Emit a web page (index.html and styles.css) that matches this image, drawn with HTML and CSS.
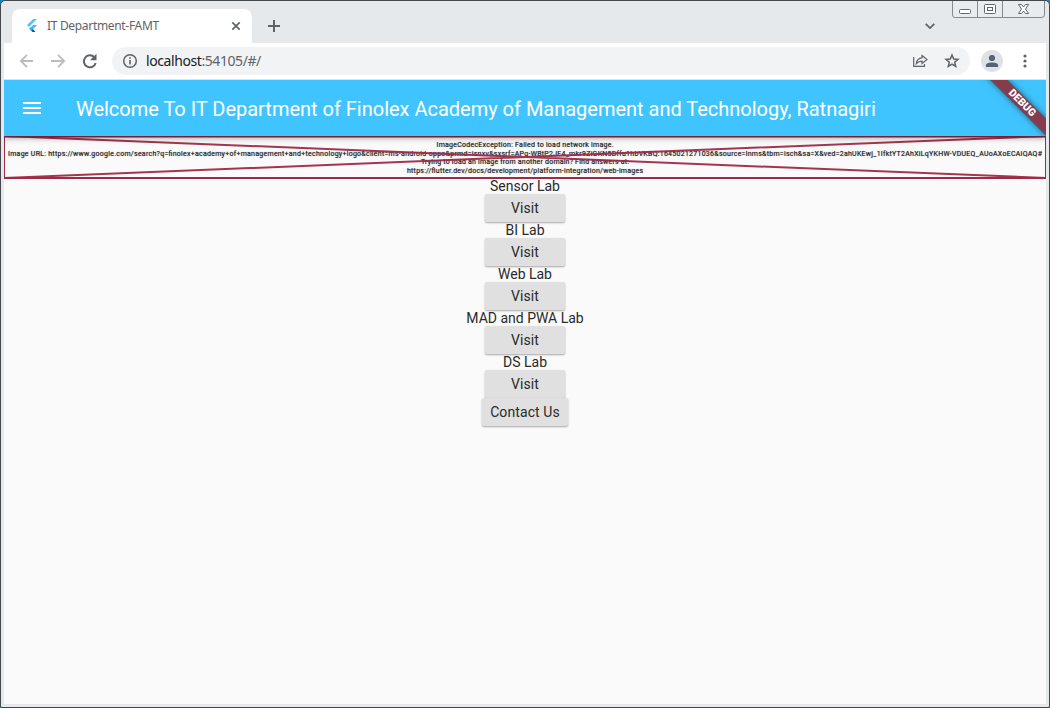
FILE: index.html
```html
<!DOCTYPE html>
<html lang="en">
<head>
<meta charset="utf-8">
<title>IT Department-FAMT</title>
<link rel="stylesheet" href="styles.css">
</head>
<body>
<div class="window">
  <header class="tabstrip">
    <div class="tab">
      <svg class="favicon" width="12" height="14" viewBox="0 0 12 14"><path d="M7.2 0H11L3 8 1 6z" fill="#54c5f8"/><path d="M7.2 6H11L7 10 5 8.2z" fill="#40b6f5"/><path d="M5 8.2 7 10.2 9.6 13H6.5L3.4 9.8z" fill="#01579b"/><path d="M3.4 9.8 5.2 8l1.8 2-1.8 1.8z" fill="#29b6f6"/></svg>
      <span class="tab-title">IT Department-FAMT</span>
      <svg class="tab-close" width="10" height="10" viewBox="0 0 10 10"><path d="M1.3 1.3 8.7 8.7M8.7 1.3 1.3 8.7" stroke="#5f6368" stroke-width="1.7"/></svg>
    </div>
    <svg class="new-tab" width="12" height="12" viewBox="0 0 12 12"><path d="M6 0V12M0 6H12" stroke="#5f6368" stroke-width="2"/></svg>
    <svg class="tab-search" width="10" height="7" viewBox="0 0 10 7"><path d="M.7.8 5 5.1 9.3.8" fill="none" stroke="#5f6368" stroke-width="1.8"/></svg>
    <svg class="controls" width="94" height="18" viewBox="0 0 94 18"><path d="M.5 0V14Q.5 16.500 3 16.500H89Q92.500 16.500 92.500 14V0M25.500 0V16M50.500 0V16" fill="#e9ecef" stroke="#858a8e"/><g fill="#fff" stroke="#63676b"><rect x="7.500" y="8.500" width="11" height="4" rx="1"/><rect x="32.500" y="3.500" width="11" height="9" rx="1"/><rect x="35.500" y="6.500" width="5" height="3"/><path d="M66.500 3.500H69.500L71.500 6 73.500 3.500H76.500L73.500 8 76.500 12.500H73.500L71.500 10 69.500 12.500H66.500L69.500 8z"/></g></svg>
  </header>
  <div class="toolbar">
    <svg class="nav" width="80" height="16" viewBox="0 0 80 16"><path d="M15 8H3M9 1.800 2.800 8 9 14.200M33 8H46M40 1.800 46.200 8 40 14.200" fill="none" stroke="#babcbe" stroke-width="1.800"/><path d="M76.300 4.200A6 6 0 1 0 77.700 10" fill="none" stroke="#5f6368" stroke-width="2"/><path d="M78.500.8V7.200H72z" fill="#5f6368"/></svg>
    <div class="omnibox">
      <svg width="16" height="16" viewBox="0 0 16 16"><circle cx="8" cy="8" r="6.300" fill="none" stroke="#5f6368" stroke-width="1.500"/><path d="M8 7V11.500M8 4.200V5.800" stroke="#5f6368" stroke-width="1.600"/></svg>
      <span class="url">localhost<span class="url-rest">:54105/#/</span></span>
      <svg class="share" width="17" height="16" viewBox="0 0 17 16"><path d="M1.700 4V13.400H12.500V11M10 2.500 15 6.500 10 10.400V8.200Q6.500 8.200 4.300 10.700 4.800 5.300 10 4.800z" fill="none" stroke="#5f6368" stroke-width="1.200"/></svg>
      <svg class="star" width="16" height="16" viewBox="0 0 16 16"><path d="M8 2 9.700 6 14 6.400 10.700 9.200 11.700 13.500 8 11.200 4.300 13.500 5.300 9.200 2 6.400 6.300 6z" fill="none" stroke="#5f6368" stroke-width="1.500"/></svg>
    </div>
    <svg class="avatar" width="22" height="22" viewBox="0 0 22 22"><circle cx="11" cy="11" r="11" fill="#dee1e6"/><circle cx="11" cy="8" r="3.100" fill="#56627a"/><path d="M5 17V15.200Q5 12.500 11 12.500T17 15.200V17z" fill="#56627a"/></svg>
    <svg class="kebab" width="4" height="14" viewBox="0 0 4 14" fill="#5f6368"><circle cx="2" cy="2" r="1.600"/><circle cx="2" cy="7" r="1.600"/><circle cx="2" cy="12" r="1.600"/></svg>
  </div>
  <main class="page">
    <div class="appbar">
      <svg class="menu" width="18" height="12" viewBox="0 0 18 12"><path d="M0 1H18M0 6H18M0 11H18" stroke="#fff" stroke-width="2"/></svg>
      <h1 class="app-title">Welcome To IT Department of Finolex Academy of Management and Technology, Ratnagiri</h1>
    </div>
    <svg class="image-error" width="1042" height="43" viewBox="0 0 1042 43">
      <g class="error-text" text-anchor="middle">
        <text x="521" y="11" textLength="177">ImageCodecException: Failed to load network image.</text>
        <text x="521" y="20" textLength="1034">Image URL: https://www.google.com/search?q=finolex+academy+of+management+and+technology+logo&amp;client=ms-android-oppo&amp;prmd=isnxv&amp;sxsrf=APq-WBtP2JF4_mkr9ZiGKN5Dffu1hbVKBQ:1645021271036&amp;source=lnms&amp;tbm=isch&amp;sa=X&amp;ved=2ahUKEwj_1IfktYT2AhXiLqYKHW-VDUEQ_AUoAXoECAIQAQ#</text>
        <text x="521" y="28" textLength="208">Trying to load an image from another domain? Find answers at:</text>
        <text x="521" y="37" textLength="236">https://flutter.dev/docs/development/platform-integration/web-images</text>
      </g>
      <g stroke="#9f2a46" fill="none" stroke-width="2"><path d="M0 0 1042 42M0 42 1042 0" stroke-opacity=".95"/><path d="M0 .5H1042M0 42H1042"/><path d="M.5 0V43M1041.500 0V43" stroke-width="1"/></g>
    </svg>
    <div class="labs">
      <span class="lab">Sensor Lab</span><button class="btn">Visit</button>
      <span class="lab">BI Lab</span><button class="btn">Visit</button>
      <span class="lab">Web Lab</span><button class="btn">Visit</button>
      <span class="lab">MAD and PWA Lab</span><button class="btn">Visit</button>
      <span class="lab">DS Lab</span><button class="btn">Visit</button>
      <button class="btn btn-wide">Contact Us</button>
    </div>
    <div class="debug"><span class="ribbon">DEBUG</span></div>
  </main>
</div>
</body>
</html>
```
FILE: styles.css
```css
* { box-sizing: border-box; }
body { margin: 0; background: #0e83c9; font-family: Roboto, sans-serif; }
svg { display: block; flex: none; }
.window { width: 1050px; height: 708px; padding: 0 3px 3px; border: 1px solid #45474a; border-radius: 5px 5px 2px 2px; background: #e5e9ec; overflow: hidden; }
.tabstrip { height: 42px; display: flex; align-items: flex-start; padding-left: 8px; }
.tab { width: 240px; height: 34px; margin-top: 8px; padding: 0 11px 0 14px; display: flex; align-items: center; background: #fff; border-radius: 8px 8px 0 0; }
.favicon { margin-right: 9px; }
.tab-title { margin-top: -1px; font: 12px "Noto Sans", sans-serif; letter-spacing: -.32px; color: #5f6368; white-space: nowrap; }
.tab-close { margin-left: auto; }
.new-tab { margin: 19px 0 0 16px; }
.tab-search { margin: 22px 17px 0 auto; }
.toolbar { height: 37px; display: flex; align-items: center; background: #fff; border-bottom: 1px solid #dfe1e4; }
.nav { margin: 0 13px 0 14px; }
.nav + .omnibox { margin-left: 1px; }
.omnibox { width: 858px; height: 28px; padding: 0 10px; display: flex; align-items: center; border-radius: 14px; background: #f1f3f4; }
.url { margin: -1px 0 0 8px; font: 14px "Noto Sans", sans-serif; letter-spacing: -.42px; color: #202124; }
.url-rest { color: #5f6368; }
.share { margin-left: auto; margin-right: 15px; }
.avatar { margin-left: 11px; }
.kebab { margin-left: 20px; }
.page { position: relative; height: 624px; background: #fafafa; overflow: hidden; }
.appbar { position: relative; z-index: 1; height: 56px; padding-left: 19px; display: flex; align-items: center; background: #40c4ff; box-shadow: 0 2px 4px -1px #0003, 0 4px 5px #0002, 0 1px 8px #0001; }
.app-title { margin: 1px 0 0 35px; font-size: 20px; font-weight: 400; letter-spacing: -.012px; color: #fff; white-space: nowrap; }
.image-error { overflow: hidden; }
.error-text { font-size: 7px; font-weight: 400; fill: #222; text-shadow: 0 0 1px #0009; }
.labs { display: flex; flex-direction: column; align-items: center; margin-top: -1px; font-size: 14px; }
.lab { height: 16px; line-height: 17px; color: #2a2a2a; }
.btn { width: 80px; height: 28px; padding: 0; border: 0; border-radius: 2px; background: #e0e0e0; color: #2a2a2a; font: 14px Roboto, sans-serif; letter-spacing: .1px; box-shadow: 0 1px 2px #0005; }
.btn-wide { width: 86px; }
.debug { position: absolute; z-index: 2; top: 0; right: 0; width: 80px; height: 56px; overflow: hidden; }
.ribbon { position: absolute; left: -14px; top: 17px; width: 140px; height: 12px; transform: rotate(45deg); background: #853c4c; box-shadow: 0 0 6px #0008; color: #fff; font-size: 10.5px; font-weight: 900; line-height: 12px; text-align: center; }
```
